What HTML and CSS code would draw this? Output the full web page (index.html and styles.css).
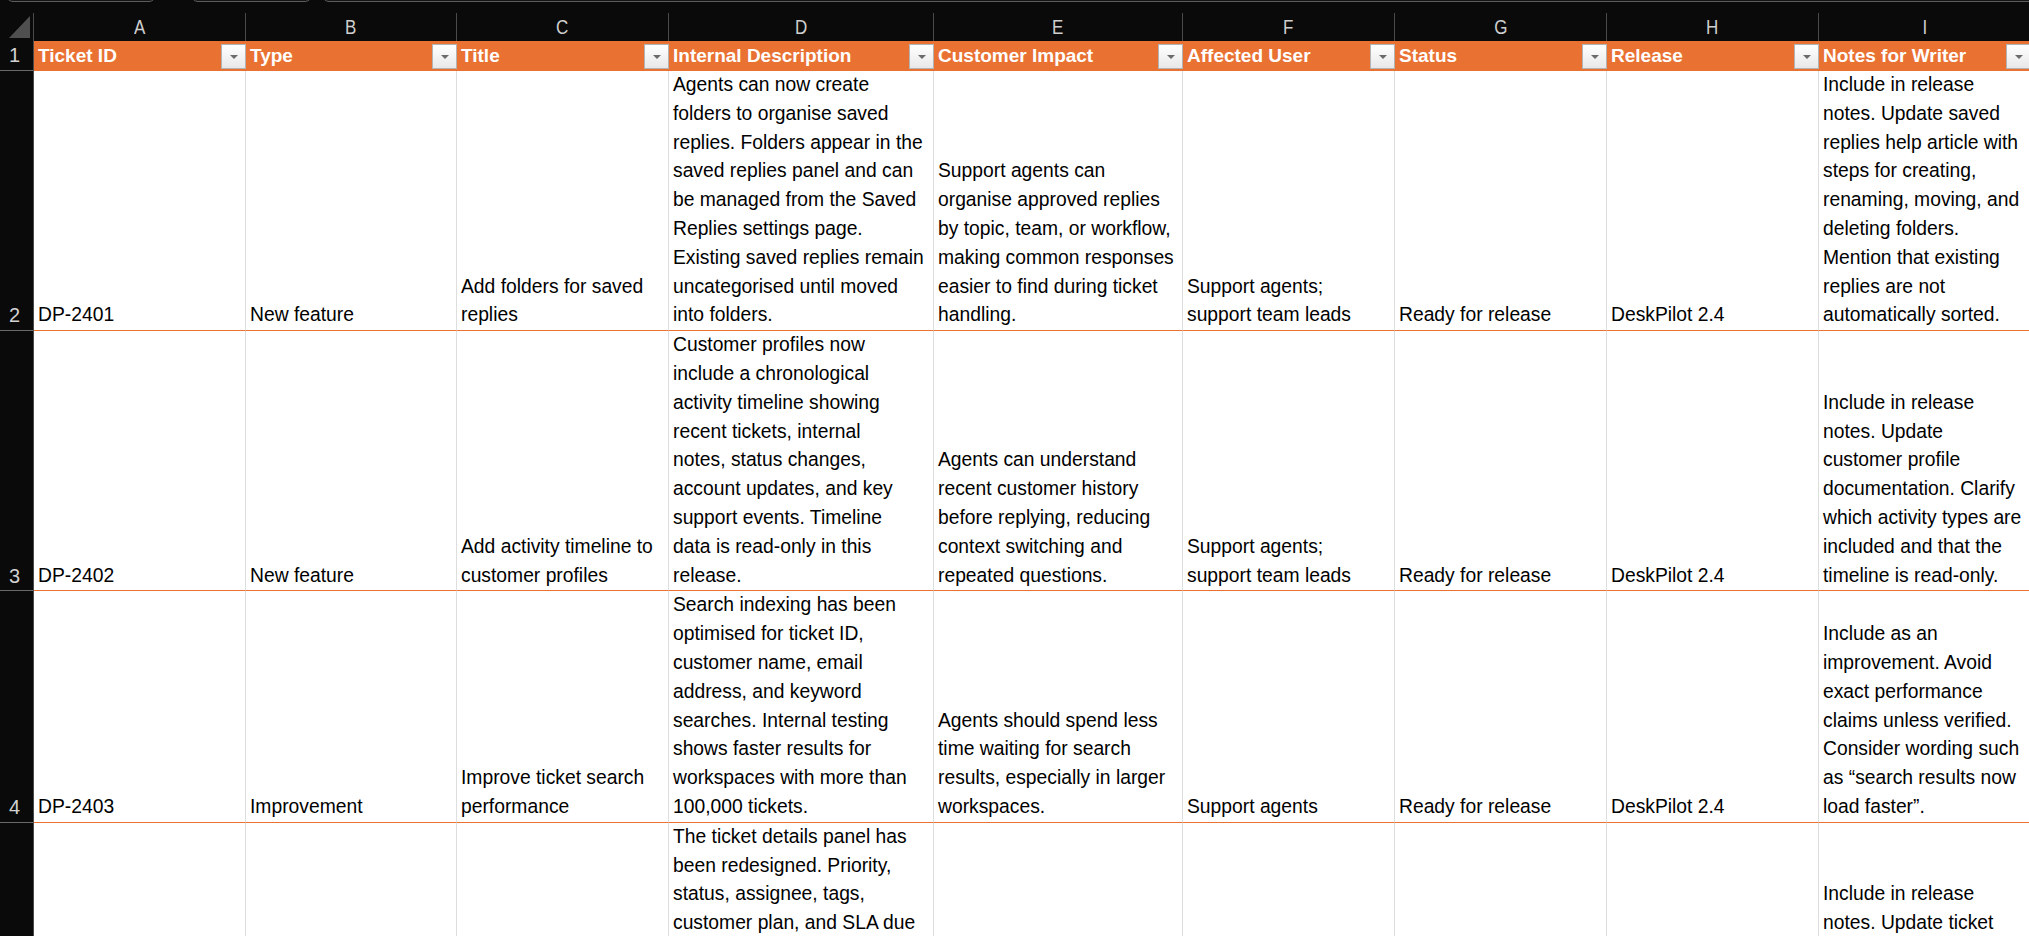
FILE: index.html
```html
<!DOCTYPE html>
<html lang="en">
<head>
<meta charset="utf-8">
<title>DeskPilot 2.4 – Release tickets</title>
<link rel="stylesheet" href="styles.css">
</head>
<body>
<div class="toolbar">
  <div class="tb-box tb-name"></div>
  <div class="tb-box tb-fx"></div>
  <div class="tb-box tb-formula"></div>
</div>

<div class="sheet">
  <!-- column letters -->
  <div class="row colhead">
    <div class="corner"><span class="corner-tri"></span></div>
    <div class="ch"><span>A</span></div><div class="ch"><span>B</span></div><div class="ch"><span>C</span></div>
    <div class="ch"><span>D</span></div><div class="ch"><span>E</span></div><div class="ch"><span>F</span></div>
    <div class="ch"><span>G</span></div><div class="ch"><span>H</span></div><div class="ch"><span>I</span></div>
  </div>

  <!-- table header -->
  <div class="row head">
    <div class="rh rh-mid">1</div>
    <div class="hc"><span>Ticket ID</span><span class="filter"></span></div>
    <div class="hc"><span>Type</span><span class="filter"></span></div>
    <div class="hc"><span>Title</span><span class="filter"></span></div>
    <div class="hc"><span>Internal Description</span><span class="filter"></span></div>
    <div class="hc"><span>Customer Impact</span><span class="filter"></span></div>
    <div class="hc"><span>Affected User</span><span class="filter"></span></div>
    <div class="hc"><span>Status</span><span class="filter"></span></div>
    <div class="hc"><span>Release</span><span class="filter"></span></div>
    <div class="hc"><span>Notes for Writer</span><span class="filter"></span></div>
  </div>

  <div class="row">
    <div class="rh">2</div>
    <div class="cell"><div>DP-2401</div></div>
    <div class="cell"><div>New feature</div></div>
    <div class="cell"><div>Add folders for saved<br>replies</div></div>
    <div class="cell"><div>Agents can now create<br>folders to organise saved<br>replies. Folders appear in the<br>saved replies panel and can<br>be managed from the Saved<br>Replies settings page.<br>Existing saved replies remain<br>uncategorised until moved<br>into folders.</div></div>
    <div class="cell"><div>Support agents can<br>organise approved replies<br>by topic, team, or workflow,<br>making common responses<br>easier to find during ticket<br>handling.</div></div>
    <div class="cell"><div>Support agents;<br>support team leads</div></div>
    <div class="cell"><div>Ready for release</div></div>
    <div class="cell"><div>DeskPilot 2.4</div></div>
    <div class="cell"><div>Include in release<br>notes. Update saved<br>replies help article with<br>steps for creating,<br>renaming, moving, and<br>deleting folders.<br>Mention that existing<br>replies are not<br>automatically sorted.</div></div>
  </div>

  <div class="row">
    <div class="rh">3</div>
    <div class="cell"><div>DP-2402</div></div>
    <div class="cell"><div>New feature</div></div>
    <div class="cell"><div>Add activity timeline to<br>customer profiles</div></div>
    <div class="cell"><div>Customer profiles now<br>include a chronological<br>activity timeline showing<br>recent tickets, internal<br>notes, status changes,<br>account updates, and key<br>support events. Timeline<br>data is read-only in this<br>release.</div></div>
    <div class="cell"><div>Agents can understand<br>recent customer history<br>before replying, reducing<br>context switching and<br>repeated questions.</div></div>
    <div class="cell"><div>Support agents;<br>support team leads</div></div>
    <div class="cell"><div>Ready for release</div></div>
    <div class="cell"><div>DeskPilot 2.4</div></div>
    <div class="cell"><div>Include in release<br>notes. Update<br>customer profile<br>documentation. Clarify<br>which activity types are<br>included and that the<br>timeline is read-only.</div></div>
  </div>

  <div class="row">
    <div class="rh">4</div>
    <div class="cell"><div>DP-2403</div></div>
    <div class="cell"><div>Improvement</div></div>
    <div class="cell"><div>Improve ticket search<br>performance</div></div>
    <div class="cell"><div>Search indexing has been<br>optimised for ticket ID,<br>customer name, email<br>address, and keyword<br>searches. Internal testing<br>shows faster results for<br>workspaces with more than<br>100,000 tickets.</div></div>
    <div class="cell"><div>Agents should spend less<br>time waiting for search<br>results, especially in larger<br>workspaces.</div></div>
    <div class="cell"><div>Support agents</div></div>
    <div class="cell"><div>Ready for release</div></div>
    <div class="cell"><div>DeskPilot 2.4</div></div>
    <div class="cell"><div>Include as an<br>improvement. Avoid<br>exact performance<br>claims unless verified.<br>Consider wording such<br>as “search results now<br>load faster”.</div></div>
  </div>

  <div class="row">
    <div class="rh">5</div>
    <div class="cell"><div>DP-2404</div></div>
    <div class="cell"><div>Improvement</div></div>
    <div class="cell"><div>Redesign ticket details<br>panel</div></div>
    <div class="cell"><div>The ticket details panel has<br>been redesigned. Priority,<br>status, assignee, tags,<br>customer plan, and SLA due<br>dates are now grouped at<br>the top of the panel.<br>Custom fields appear in a<br>collapsible section below<br>the summary.</div></div>
    <div class="cell"><div>Agents can review key<br>ticket details at a glance<br>without scrolling through<br>the full panel.</div></div>
    <div class="cell"><div>Support agents</div></div>
    <div class="cell"><div>Ready for release</div></div>
    <div class="cell"><div>DeskPilot 2.4</div></div>
    <div class="cell"><div>Include in release<br>notes. Update ticket<br>details panel<br>screenshots and the<br>ticket view help article.<br>Note that custom fields<br>are now collapsible.</div></div>
  </div>
</div>
</body>
</html>
```

FILE: styles.css
```css
html, body {
  margin: 0;
  padding: 0;
  background: #0a0a0a;
  overflow: hidden;
}

body {
  width: 2029px;
  height: 936px;
  font-family: "Liberation Sans", Arial, sans-serif;
  font-size: 19.3px;
  color: #000;
}

/* strip under the ribbon: only the bottom edges of the name box,
   function button and formula bar show here */
.toolbar {
  height: 13px;
  display: flex;
  align-items: flex-end;
  overflow: hidden;
  padding-left: 6px;
  background: #0a0a0a;
}

.tb-box {
  height: 30px;
  margin-bottom: 11px;
  box-sizing: border-box;
  border: 1px solid #5c5c5c;
  border-radius: 7px;
  background: #141414;
  flex: none;
}

.tb-name { width: 150px; }
.tb-fx { width: 121px; margin-left: 35px; }
.tb-formula { flex: 1; margin-left: 10px; margin-right: -20px; }

/* grid */
.sheet {
  width: 2031px;
}

.row {
  display: grid;
  grid-template-columns: 34px 212px 211px 212px 265px 249px 212px 212px 212px 212px;
}

/* column letters */
.colhead {
  height: 28px;
  background: #0a0a0a;
}

.corner {
  display: flex;
  align-items: flex-end;
  justify-content: flex-end;
  padding: 0 3px 3px 0;
  border-right: 1px solid #4a4a4a;
}

.corner-tri {
  width: 21px;
  height: 22px;
  background: #4f4f4f;
  clip-path: polygon(100% 0, 100% 100%, 0 100%);
}

.ch {
  display: flex;
  align-items: center;
  justify-content: center;
  color: #cfcfcf;
  font-size: 20px;
  border-right: 1px solid #4a4a4a;
}

.ch span {
  display: inline-block;
  transform: scaleX(0.85);
}

/* row numbers */
.rh {
  background: #0a0a0a;
  color: #d2d2d2;
  font-size: 20px;
  line-height: 28.8px;
  display: flex;
  align-items: flex-end;
  justify-content: center;
  padding-right: 4px;
  border-bottom: 1px solid #6a6a6a;
  border-right: 1px solid #4a4a4a;
}

.rh-mid {
  align-items: center;
}

/* table header */
.head {
  height: 30px;
}

.hc {
  background: #e97132;
  color: #fff;
  font-weight: bold;
  font-size: 19px;
  display: flex;
  align-items: center;
  justify-content: space-between;
  padding-left: 4px;
  white-space: nowrap;
  overflow: hidden;
}

.filter {
  flex: none;
  width: 25px;
  height: 25px;
  box-sizing: border-box;
  border: 1px solid #b3b3b3;
  background: linear-gradient(#ffffff, #e8e8e8);
  display: flex;
  align-items: center;
  justify-content: center;
}

.filter::after {
  content: "";
  border-left: 4px solid transparent;
  border-right: 4px solid transparent;
  border-top: 4px solid #6b6b6b;
  margin-top: 1px;
}

/* data cells: wrapped text sitting on the bottom of the cell */
.cell {
  background: #fff;
  border-right: 1px solid #dedede;
  border-bottom: 1px solid #e97132;
  padding: 0 4px;
  line-height: 28.8px;
  display: flex;
  flex-direction: column;
  justify-content: flex-end;
  white-space: nowrap;
  overflow: hidden;
}
```
